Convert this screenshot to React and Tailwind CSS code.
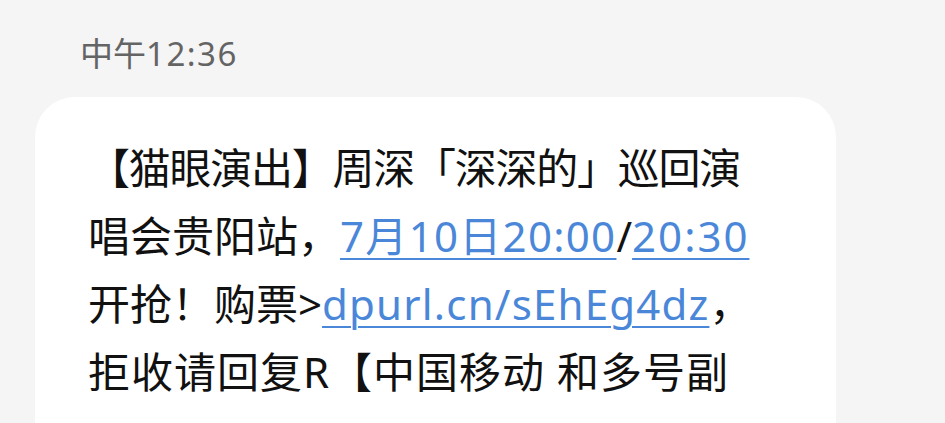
export default function App() {
  const link = "text-[#4b87d9] underline decoration-[2px] underline-offset-[6px] decoration-[#4b87d9]";
  return (
    <div
      className="h-[423px] w-[945px] overflow-hidden bg-[#f5f5f5]"
      style={{ fontFamily: '"Noto Sans", "Noto Sans CJK SC", sans-serif' }}
    >
      <div className="pl-[80px] pt-[37px] text-[33px] leading-[33px] text-[#646464]">
        中午<span className="tracking-[1.5px]">12:36</span>
      </div>
      <div className="ml-[35px] mt-[27px] h-[400px] w-[801px] rounded-[40px] bg-white pl-[53px] pt-[37px] text-[42px] leading-[68px] text-[#111]">
        <div className="whitespace-nowrap tracking-[-1.25px]">【猫眼演出】周深「深深的」巡回演</div>
        <div className="whitespace-nowrap">
          唱会贵阳站，<span className={`${link} tracking-[1.3px]`}>7月10日20:00</span>/<span className={`${link} tracking-[2px]`}>20:30</span>
        </div>
        <div className="whitespace-nowrap">
          开抢！购票&gt;<span className={`${link} tracking-[1.2px]`}>dpurl.cn/sEhEg4dz</span>，
        </div>
        <div className="whitespace-nowrap tracking-[1px]">拒收请回复R【中国移动 和多号副</div>
      </div>
    </div>
  );
}
